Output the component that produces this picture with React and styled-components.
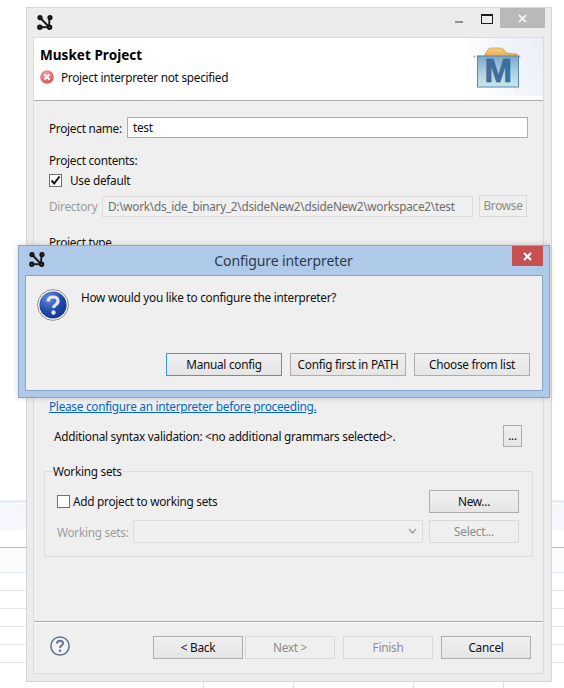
import React from "react";
import styled, { createGlobalStyle } from "styled-components";

const Global = createGlobalStyle`
  html, body { margin: 0; padding: 0; background: #fff; }
  body { font-family: "Noto Sans", "Open Sans", sans-serif; font-size: 11.8px; letter-spacing: -0.27px; color: #111; }
  #root { width: 564px; height: 688px; overflow: hidden; position: relative; }
  svg { flex: none; }
`;

/* desktop behind the window */
const Desktop = styled.div`
  width: 564px; height: 688px; display: flex; flex-direction: column; position: relative; background: #fff;
`;
const Band = styled.div`
  height: ${p => p.$h}px; flex: none; background: ${p => p.$bg || "#fff"};
  border-bottom: ${p => (p.$line ? `1px solid ${p.$line}` : "none")};
`;
const FootCells = styled.div`
  flex: 1; display: grid; grid-template-columns: 204px 90px 120px 90px 1fr;
`;
const FootCell = styled.div`border-right: 1px solid #e2e2e2;`;

/* eclipse window */
const Win = styled.div`
  position: absolute; left: 26px; top: 7px; width: 526px; height: 675px; box-sizing: border-box;
  background: #ececec; border: 1px solid #d6d6d6; display: flex; flex-direction: column;
`;
const TitleBar = styled.div`
  height: 29px; flex: none; display: flex; align-items: flex-start; padding-left: 10px; box-sizing: border-box;
`;
const AppIconWrap = styled.div`margin-top: ${p => p.$mt}px; width: 16px; height: 15px; flex: none;`;
const WinControls = styled.div`
  margin-left: auto; display: flex; margin-right: 6px; align-items: flex-start;
`;
const MinBtn = styled.div`width: 8px; height: 2px; background: #8f8f8f; margin: 13px 18px 0 0;`;
const MaxBtn = styled.div`
  width: 10px; height: 7px; box-sizing: content-box; border: 1px solid #1c1c1c; border-top-width: 2px;
  margin: 6px 7px 0 0;
`;
const CloseBtn = styled.div`
  width: ${p => p.$w}px; height: 20px; background: ${p => p.$bg}; display: flex; align-items: center; justify-content: center;
`;
const Panel = styled.div`
  flex: 1; margin: 0 7px 7px 6px; border: 1px solid #dcdcdc; background: #efefef;
  display: flex; flex-direction: column; min-height: 0;
`;
const Banner = styled.div`
  height: 62px; flex: none; background: #fff; border-bottom: 1px solid #a9a9a9; position: relative;
  display: flex; flex-direction: column; padding: 0 0 0 6px;
  &::before {
    content: ""; position: absolute; right: 0; top: 0; width: 80px; height: 58px;
    background: linear-gradient(245deg, #e9eef9 0%, #f3f6fc 45%, #ffffff 80%);
  }
`;
const BannerTitle = styled.div`
  font-weight: 700; font-size: 13.5px; line-height: 18px; margin-top: 8px; color: #000; letter-spacing: 0.05px;
`;
const BannerMsg = styled.div`
  display: flex; align-items: center; gap: 7px; margin-top: 5px; height: 16px; color: #111;
`;
const Logo = styled.div`position: absolute; right: 20px; top: 9px; width: 50px; height: 42px;`;

const Body = styled.div`
  flex: 1; display: flex; flex-direction: column; padding: 16px 15px 0 15px; min-height: 0;
`;
const Row = styled.div`
  display: flex; align-items: center; height: ${p => p.$h}px; margin-top: ${p => p.$mt || 0}px; flex: none;
  padding-left: ${p => p.$pl || 0}px;
`;
const Label = styled.span`
  color: ${p => (p.$off ? "#9c9c9c" : "#111")}; white-space: nowrap; flex: none;
  width: ${p => (p.$w ? `${p.$w}px` : "auto")}; margin-left: ${p => p.$ml || 0}px;
  margin-top: ${p => p.$up ? "-2px" : "0"};
`;
const TextBox = styled.div`
  box-sizing: border-box; height: ${p => p.$h || 21}px; width: ${p => p.$w}px; flex: none;
  background: ${p => (p.$off ? "#f0f0f0" : "#fff")};
  border: 1px solid ${p => (p.$off ? "#dcdcdc" : "#ababab")};
  color: ${p => (p.$off ? "#6d6d6d" : "#111")};
  padding-left: 5px; line-height: 19px; white-space: nowrap; overflow: hidden;
  position: relative;
`;
const Check = styled.div`
  width: 13px; height: 13px; box-sizing: border-box; border: 1px solid #707070; background: #fff; flex: none;
  display: flex; align-items: center; justify-content: center;
`;
const Btn = styled.div`
  box-sizing: border-box; width: ${p => p.$w}px; height: ${p => p.$h || 23}px; flex: none;
  margin-left: ${p => (p.$auto ? "auto" : `${p.$ml || 0}px`)};
  margin-right: ${p => p.$mr || 0}px; padding-bottom: 2px;
  display: flex; align-items: center; justify-content: center; white-space: nowrap;
  border: 1px solid ${p => (p.$off ? "#d9d9d9" : p.$focus ? "#3399ff" : "#adadad")};
  color: ${p => (p.$off ? "#8b8b8b" : "#111")};
  background: ${p => (p.$off ? "#efefef" : "linear-gradient(#f0f0f0, #e5e5e5)")};
`;
const Link = styled.a`color: #0066cc; text-decoration: underline;`;
const Group = styled.fieldset`
  margin: 18px 0 0 -5px; padding: 0 13px 0 12px; box-sizing: border-box; width: 489px; height: 92px; flex: none;
  border: 1px solid #dcdcdc; display: flex; flex-direction: column; min-width: 0;
`;
const Legend = styled.legend`padding: 0 1px 0 0; margin-left: -4px; line-height: 12px; height: 12px;`;
const Footer = styled.div`
  height: 52px; box-sizing: border-box; flex: none; border-top: 1px solid #a9a9a9; box-shadow: inset 0 1px 0 #fff;
  display: flex; align-items: flex-start; padding: 14px 0 0 16px;
`;

/* dialog */
const Dialog = styled.div`
  position: absolute; left: 18px; top: 245px; width: 532px; height: 153px; box-sizing: border-box;
  background: #aecae8; border: 1px solid #8aa6c6; box-shadow: 0 0 6px rgba(0,0,0,.18);
  display: flex; flex-direction: column;
`;
const DialogTitle = styled.div`
  height: 29px; flex: none; display: flex; align-items: flex-start; position: relative; padding-left: 10px;
`;
const DialogCaption = styled.div`
  position: absolute; left: 0; right: 1px; top: 5px; text-align: center; font-size: 14px; line-height: 20px; color: #2c3b4c; letter-spacing: -0.1px;
`;
const DialogClose = styled.div`position: absolute; right: 6px; top: 0;`;
const DialogBody = styled.div`
  flex: 1; margin: 0 6px 6px 6px; background: #efefef; border: 1px solid #8aa6c6; display: flex; flex-direction: column;
  padding: 13px 12px 0 11px;
`;
const Ask = styled.div`display: flex; align-items: flex-start; gap: 12px; height: 64px; flex: none;`;
const AskText = styled.div`line-height: 16px;`;
const DialogButtons = styled.div`display: flex; gap: 8px; padding-left: 129px;`;

const NetIcon = () => (
  <svg width="16" height="15" viewBox="0 0 16 15">
    <g stroke="#1a1a1a" strokeWidth="1.9" fill="none">
      <path d="M3 2.5 L12 12 M12.5 2.5 L12 12 M3 12.3 L12 12" />
    </g>
    <g fill="#666" stroke="#111" strokeWidth="2">
      <circle cx="3" cy="2.6" r="1.6" /><circle cx="13" cy="2.6" r="1.6" />
      <circle cx="2.8" cy="12.2" r="1.7" /><circle cx="12.6" cy="12.2" r="1.7" />
    </g>
  </svg>
);
const XMark = ({ s = 9, w = 2 }) => (
  <svg width={s} height={s} viewBox="0 0 9 9"><path d="M1 1 L8 8 M8 1 L1 8" stroke="#fff" strokeWidth={w} /></svg>
);
const ErrorIcon = () => (
  <svg width="14" height="14" viewBox="0 0 14 14">
    <defs><radialGradient id="er" cx=".4" cy=".3" r=".8"><stop offset="0" stopColor="#f3a5a5" /><stop offset="1" stopColor="#d24a4a" /></radialGradient></defs>
    <circle cx="7" cy="7" r="6.8" fill="url(#er)" />
    <path d="M4.4 4.4 L9.6 9.6 M9.6 4.4 L4.4 9.6" stroke="#fff" strokeWidth="1.9" />
  </svg>
);
const MusketLogo = () => (
  <svg width="50" height="42" viewBox="0 0 50 42">
    <defs>
      <linearGradient id="box" x1="0" y1="0" x2="0" y2="1"><stop offset="0" stopColor="#7ba6cd" /><stop offset=".5" stopColor="#a9cfe3" /><stop offset="1" stopColor="#c9e6ee" /></linearGradient>
      <linearGradient id="lid" x1="0" y1="0" x2="0" y2="1"><stop offset="0" stopColor="#f8cf85" /><stop offset="1" stopColor="#eaa748" /></linearGradient>
      <linearGradient id="shadow" x1="0" y1="0" x2="1" y2="0"><stop offset="0" stopColor="#bcc3d3" /><stop offset="1" stopColor="#bcc3d3" stopOpacity="0" /></linearGradient>
    </defs>
    <path d="M40 33 L49 35 L40 41 Z" fill="url(#shadow)" />
    <path d="M2 10 L1 9 M46 10 L47 9" stroke="#9aa" strokeWidth="2" />
    <path d="M5 9 L11 9 L15 2.5 Q16 1 18 1 L27 1 Q30 1 31 3 L33 6 L44 7 L44 10 L5 10 Z" fill="url(#lid)" stroke="#c08a3a" strokeWidth=".6" />
    <rect x="4.5" y="9" width="41" height="31" fill="url(#box)" stroke="#5d86ab" strokeWidth="1" />
    <text x="25" y="35" textAnchor="middle" fontFamily="Liberation Sans, sans-serif" fontWeight="700" fontSize="33" fill="#3f6f9c" stroke="#33608c" strokeWidth=".6">M</text>
  </svg>
);
const QuestionIcon = () => (
  <svg width="32" height="32" viewBox="0 0 32 32">
    <defs>
      <radialGradient id="qb" cx=".35" cy=".25" r=".9"><stop offset="0" stopColor="#6a8fe0" /><stop offset=".55" stopColor="#1f46a8" /><stop offset="1" stopColor="#122f82" /></radialGradient>
    </defs>
    <circle cx="16" cy="16" r="15.4" fill="#fff" stroke="#8b8b8b" strokeWidth="1" />
    <circle cx="16" cy="16" r="13.6" fill="url(#qb)" />
    <path d="M11 12.5 Q11.5 8 16.2 8 Q21 8 21 12 Q21 14.4 18.5 15.8 Q16.6 16.8 16.6 19" fill="none" stroke="#e4e6ee" strokeWidth="3.2" />
    <circle cx="16.5" cy="23.5" r="2.2" fill="#e4e6ee" />
  </svg>
);
const HelpIcon = () => (
  <svg width="20" height="20" viewBox="0 0 20 20">
    <circle cx="10" cy="10" r="9.1" fill="#f2f4f8" stroke="#5f7390" strokeWidth="1.5" />
    <path d="M6.9 7.6 Q7.2 4.8 10 4.8 Q13 4.8 13 7.3 Q13 8.8 11.4 9.7 Q10.1 10.4 10.1 12" fill="none" stroke="#64768f" strokeWidth="2" />
    <circle cx="10.1" cy="14.8" r="1.3" fill="#64768f" />
  </svg>
);
const Tick = () => (
  <svg width="11" height="11" viewBox="0 0 11 11"><path d="M1.5 5.5 L4.2 8.5 L9.5 1.5" fill="none" stroke="#111" strokeWidth="2" /></svg>
);
const Chevron = styled.svg`position: absolute; right: 5px; top: 7px;`;

export default function App() {
  return (
    <>
      <Global />
      <Desktop>
        <Band $h={500} />
        <Band $h={3} $bg="#e8ecf8" />
        <Band $h={1} />
        <Band $h={26} $bg="#f6f7fc" />
        <Band $h={17} $line="#b9b9b9" />
        <Band $h={24} $bg="#fbfbfb" $line="#e3ecf7" />
        <Band $h={17} $line="#e6e6e6" />
        <Band $h={17} $line="#e6e6e6" />
        <Band $h={17} $line="#e6e6e6" />
        <Band $h={17} $line="#e6e6e6" />
        <Band $h={17} $line="#e6e6e6" />
        <Band $h={19} />
        <FootCells><FootCell /><FootCell /><FootCell /><FootCell /><div /></FootCells>
      </Desktop>

      <Win>
        <TitleBar>
          <AppIconWrap $mt={7}><NetIcon /></AppIconWrap>
          <WinControls>
            <MinBtn />
            <MaxBtn />
            <CloseBtn $w={45} $bg="#b9b9b9"><XMark s={9} w={1.6} /></CloseBtn>
          </WinControls>
        </TitleBar>
        <Panel>
          <Banner>
            <BannerTitle>Musket Project</BannerTitle>
            <BannerMsg><ErrorIcon /><span>Project interpreter not specified</span></BannerMsg>
            <Logo><MusketLogo /></Logo>
          </Banner>
          <Body>
            <Row $h={21}>
              <Label $w={78}>Project name:</Label>
              <TextBox $w={401}>test</TextBox>
            </Row>
            <Row $h={16} $mt={14}><Label>Project contents:</Label></Row>
            <Row $h={16} $mt={4}>
              <Check><Tick /></Check>
              <Label $ml={8}>Use default</Label>
            </Row>
            <Row $h={22} $mt={7}>
              <Label $off $w={53}>Directory</Label>
              <TextBox $off $w={371}>D:\work\ds_ide_binary_2\dsideNew2\dsideNew2\workspace2\test</TextBox>
              <Btn $off $w={48} $h={22} $ml={6}>Browse</Btn>
            </Row>
            <Row $h={16} $mt={17}><Label>Project type</Label></Row>
            <Row $h={16} $mt={148}><Link>Please configure an interpreter before proceeding.</Link></Row>
            <Row $h={22} $mt={11} $pl={5}>
              <Label>Additional syntax validation: &lt;no additional grammars selected&gt;.</Label>
              <Btn $auto $mr={6} $w={19} $h={22}>...</Btn>
            </Row>
            <Group>
              <Legend>Working sets</Legend>
              <Row $h={23} $mt={13}>
                <Check />
                <Label $ml={3} $up>Add project to working sets</Label>
                <Btn $auto $w={90}>New...</Btn>
              </Row>
              <Row $h={23} $mt={7}>
                <Label $off $w={76}>Working sets:</Label>
                <TextBox $off $w={290} $h={23}>
                  <Chevron width="9" height="7" viewBox="0 0 9 7"><path d="M1 1 L4.5 5 L8 1" fill="none" stroke="#a5a5a5" strokeWidth="1.6" /></Chevron>
                </TextBox>
                <Btn $off $w={90} $ml={6}>Select...</Btn>
              </Row>
            </Group>
          </Body>
          <Footer>
            <HelpIcon />
            <Btn $w={90} $ml={83}>&lt; Back</Btn>
            <Btn $off $w={90} $ml={2}>Next &gt;</Btn>
            <Btn $off $w={90} $ml={8}>Finish</Btn>
            <Btn $w={90} $ml={8}>Cancel</Btn>
          </Footer>
        </Panel>
      </Win>

      <Dialog>
        <DialogTitle>
          <AppIconWrap $mt={6}><NetIcon /></AppIconWrap>
          <DialogCaption>Configure interpreter</DialogCaption>
          <DialogClose><CloseBtn $w={31} $bg="#c75050"><XMark s={9} w={2} /></CloseBtn></DialogClose>
        </DialogTitle>
        <DialogBody>
          <Ask>
            <QuestionIcon />
            <AskText>How would you like to configure the interpreter?</AskText>
          </Ask>
          <DialogButtons>
            <Btn $focus $w={116}>Manual config</Btn>
            <Btn $w={116}>Config first in PATH</Btn>
            <Btn $w={116}>Choose from list</Btn>
          </DialogButtons>
        </DialogBody>
      </Dialog>
    </>
  );
}
